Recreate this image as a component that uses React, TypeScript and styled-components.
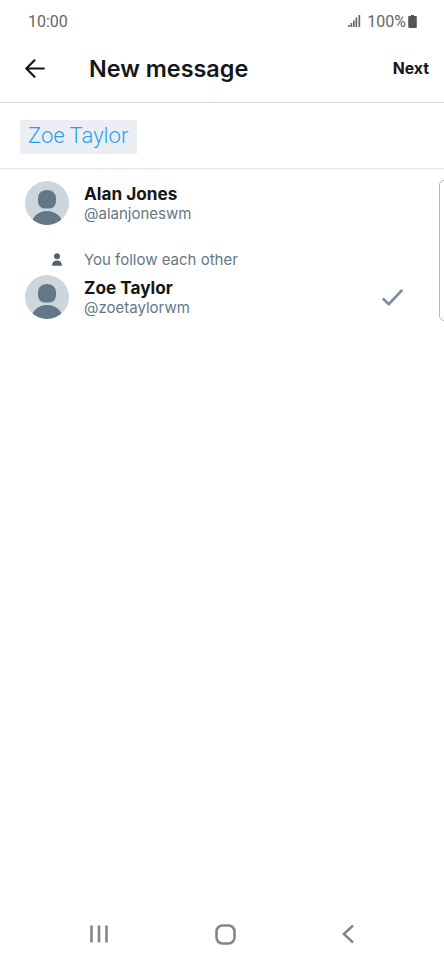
import React from 'react';
import styled, { createGlobalStyle } from 'styled-components';

const GlobalStyle = createGlobalStyle`
    html, body {
        margin: 0;
        padding: 0;
        background: #fff;
    }
    * {
        box-sizing: border-box;
    }
`;

const Screen = styled.div`
    position: relative;
    width: 444px;
    height: 962px;
    display: flex;
    flex-direction: column;
    background: #fff;
    overflow: hidden;
    font-family: Inter, "Liberation Sans", sans-serif;
`;

const StatusBar = styled.div`
    height: 42px;
    padding: 0 27px 0 28px;
    display: flex;
    align-items: center;
    justify-content: space-between;
    font-family: Roboto, sans-serif;
    font-size: 16px;
    color: #666;
`;

const StatusRight = styled.div`
    display: flex;
    align-items: center;
`;

const BatteryText = styled.span`
    margin: 0 2px 0 6px;
`;

const Header = styled.div`
    height: 61px;
    padding: 0 15px 7px 25px;
    display: flex;
    align-items: center;
    border-bottom: 1px solid #d5dce1;
`;

const Title = styled.div`
    margin-left: 44px;
    flex: 1;
    font-size: 23.4px;
    font-weight: 600;
    color: #14171a;
`;

const NextButton = styled.div`
    margin-top: -1px;
    font-size: 15.8px;
    font-weight: 700;
    color: #14171a;
`;

const SearchBar = styled.div`
    height: 66px;
    padding: 17px 20px 0;
    border-bottom: 1px solid #e4e7ea;
    box-shadow: 0 1px 2px rgba(0, 0, 0, 0.05);
`;

const Chip = styled.span`
    display: inline-flex;
    align-items: center;
    height: 34px;
    padding: 0 9px 3px 8px;
    background: #ebeff3;
    font-family: Roboto, sans-serif;
    font-size: 22px;
    font-weight: 300;
    color: #2a9df4;
`;

const List = styled.div`
    padding: 12px 41px 0 25px;
    display: flex;
    flex-direction: column;
`;

const UserRow = styled.div`
    display: flex;
    align-items: center;
    gap: 15px;
    height: 44px;
`;

const Avatar = styled.div`
    width: 44px;
    height: 44px;
    flex: none;
    border-radius: 50%;
    overflow: hidden;
    background: #ccd6dd;
`;

const UserInfo = styled.div`
    flex: 1;
    display: flex;
    flex-direction: column;
    gap: 1px;
`;

const Name = styled.div`
    font-size: 17.2px;
    line-height: 21px;
    font-weight: 700;
    color: #14171a;
`;

const Handle = styled.div`
    font-size: 15px;
    line-height: 18px;
    color: #657786;
`;

const FollowRow = styled.div`
    margin-top: 24px;
    height: 20px;
    display: flex;
    align-items: center;
    font-size: 15px;
    color: #657786;
`;

const FollowIcon = styled.div`
    width: 59px;
    padding-left: 27px;
    display: flex;
    align-items: center;
`;

const FollowGap = styled.div`
    height: 6px;
`;

const SideHandle = styled.div`
    position: absolute;
    top: 180px;
    left: 439px;
    width: 12px;
    height: 141px;
    border: 1px solid #b4b8bb;
    border-radius: 5px;
`;

const NavBar = styled.div`
    position: absolute;
    left: 0;
    right: 0;
    bottom: 0;
    height: 56px;
    padding: 0 88px 0 90px;
    display: flex;
    align-items: center;
    justify-content: space-between;
`;

const SignalIcon = () => (
    <svg width="13" height="12" viewBox="0 0 13 12">
        <rect x="0" y="10" width="1.7" height="2" fill="#666" />
        <rect x="2.5" y="8" width="1.7" height="4" fill="#666" />
        <rect x="5" y="5.500" width="1.7" height="6.500" fill="#666" />
        <rect x="7.500" y="2.500" width="1.7" height="9.500" fill="#666" />
        <rect x="10.500" y="0" width="1.700" height="12" fill="#666" />
    </svg>
);

const BatteryIcon = () => (
    <svg width="9" height="13" viewBox="0 0 9 13">
        <path d="M3 0h3v1h1.600c.8 0 1.200.5 1.200 1.200v9.600c0 .8-.5 1.200-1.200 1.200H1.400C.6 13 .2 12.500.2 11.800V2.200C.2 1.500.6 1 1.400 1H3z" fill="#555" />
    </svg>
);

const BackArrow = () => (
    <svg width="20" height="19" viewBox="0 0 20 19" fill="none" stroke="#14171a" strokeWidth="2.200" strokeLinecap="round" strokeLinejoin="round">
        <path d="M1.300 9.500H18.800M9.500 1.300L1.300 9.500L9.500 17.700" />
    </svg>
);

const PersonAvatar = () => (
    <svg width="44" height="44" viewBox="0 0 44 44">
        <path d="M22 9c-5.500 0-9 3.500-9 8.500v2.500c0 4.500 3 7.500 6.500 7.500h5c3.500 0 6.500-3 6.500-7.500v-2.500C31 12.500 27.500 9 22 9z" fill="#657786" />
        <path d="M6 44c1-8.500 7.500-14 16-14s15 5.500 16 14z" fill="#657786" />
    </svg>
);

const SmallPerson = () => (
    <svg width="10" height="13" viewBox="0 0 10 13">
        <circle cx="5" cy="3.200" r="3" fill="#536471" />
        <path d="M0 12.800c0-3.500 2-5.300 5-5.300s5 1.800 5 5.300z" fill="#536471" />
    </svg>
);

const CheckIcon = () => (
    <svg width="21" height="17" viewBox="0 0 21 17" fill="none" stroke="#7b8c9a" strokeWidth="2.600">
        <path d="M0.800 9.500L6.800 15.200L20.200 0.900" />
    </svg>
);

const RecentsIcon = () => (
    <svg width="18" height="20" viewBox="0 0 18 20" stroke="#858585" strokeWidth="2.600" fill="none">
        <path d="M1.500 1.500V18.500M9 1.500V18.500M16.500 1.500V18.500" />
    </svg>
);

const HomeIcon = () => (
    <svg width="21" height="21" viewBox="0 0 21 21" fill="none" stroke="#858585" strokeWidth="2.600">
        <rect x="1.500" y="1.500" width="18" height="18" rx="6" />
    </svg>
);

const BackIcon = () => (
    <svg width="14" height="20" viewBox="0 0 14 20" fill="none" stroke="#858585" strokeWidth="2.400">
        <path d="M11 1.500L1.800 10L11 18.500" />
    </svg>
);

export default function App() {
    return (
        <Screen>
            <GlobalStyle />
            <StatusBar>
                <span>10:00</span>
                <StatusRight>
                    <SignalIcon />
                    <BatteryText>100%</BatteryText>
                    <BatteryIcon />
                </StatusRight>
            </StatusBar>
            <Header>
                <BackArrow />
                <Title>New message</Title>
                <NextButton>Next</NextButton>
            </Header>
            <SearchBar>
                <Chip>Zoe Taylor</Chip>
            </SearchBar>
            <List>
                <UserRow>
                    <Avatar><PersonAvatar /></Avatar>
                    <UserInfo>
                        <Name>Alan Jones</Name>
                        <Handle>@alanjoneswm</Handle>
                    </UserInfo>
                </UserRow>
                <FollowRow>
                    <FollowIcon><SmallPerson /></FollowIcon>
                    You follow each other
                </FollowRow>
                <FollowGap />
                <UserRow>
                    <Avatar><PersonAvatar /></Avatar>
                    <UserInfo>
                        <Name>Zoe Taylor</Name>
                        <Handle>@zoetaylorwm</Handle>
                    </UserInfo>
                    <CheckIcon />
                </UserRow>
            </List>
            <SideHandle />
            <NavBar>
                <RecentsIcon />
                <HomeIcon />
                <BackIcon />
            </NavBar>
        </Screen>
    );
}
